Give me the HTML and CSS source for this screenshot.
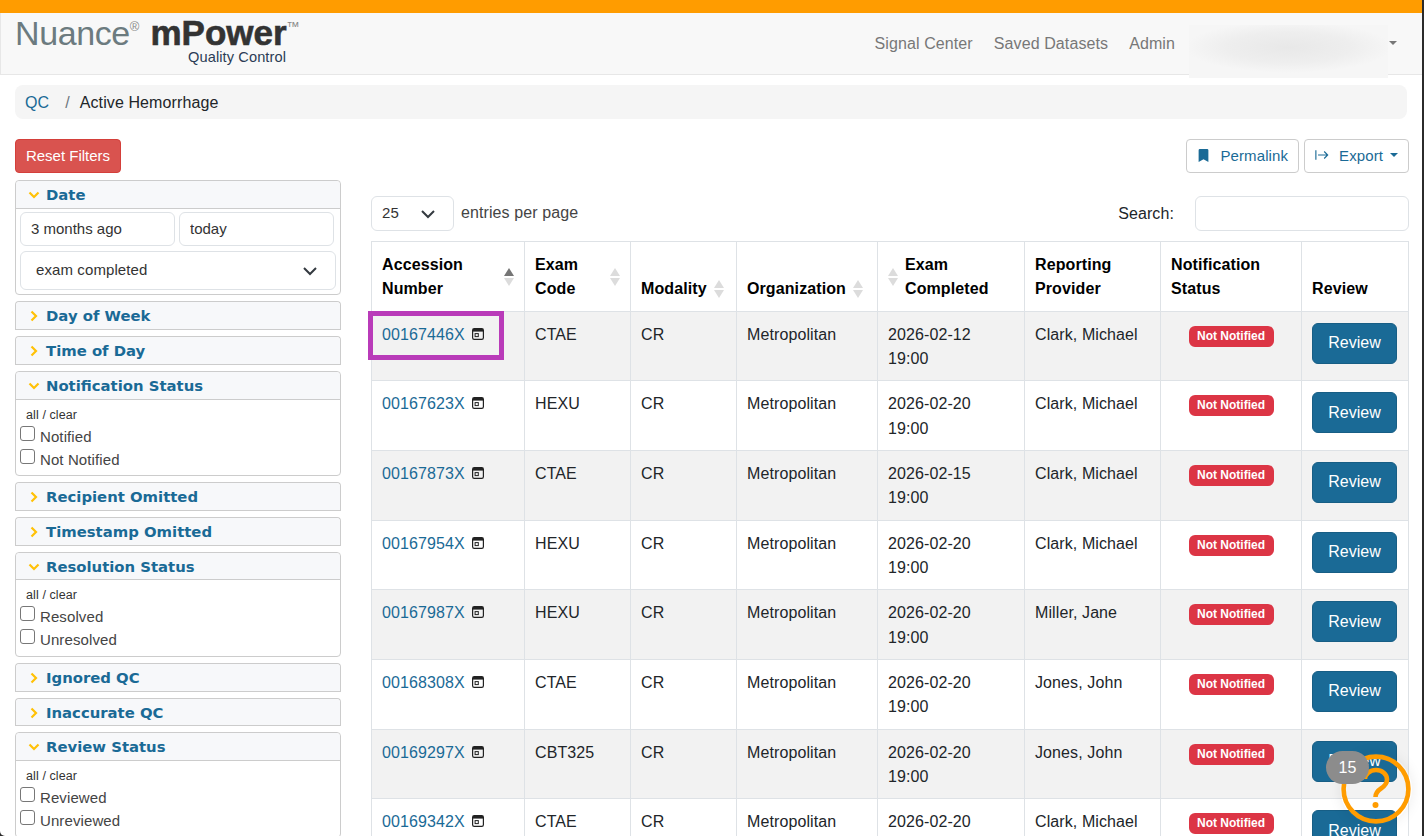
FILE: index.html
```html
<!DOCTYPE html>
<html lang="en">

<head>
    <meta charset="UTF-8">
    <meta name="viewport" content="width=device-width, initial-scale=1.0">
    <title>Active Hemorrhage</title>
    <link rel="stylesheet" href="styles.css">
</head>

<body>
    <svg class="icon-defs" aria-hidden="true">
        <symbol id="icon-window" viewBox="0 0 12 12">
            <rect x=".6" y=".6" width="10.800" height="10.800" rx="1.600" fill="none" stroke="currentColor" stroke-width="1.200"/>
            <path d="M1 1h10v2.600H1z" fill="currentColor"/>
            <rect x="3.100" y="5.600" width="3.200" height="3" fill="none" stroke="currentColor"/>
        </symbol>
        <symbol id="icon-open" viewBox="0 0 12 12">
            <path d="M1.500 3.500 6 8l4.500-4.500"/>
        </symbol>
        <symbol id="icon-closed" viewBox="0 0 12 12">
            <path d="M3.500 1.500 8 6l-4.500 4.500"/>
        </symbol>
    </svg>

    <div class="page">
        <div class="top-strip"></div>

        <nav class="navbar">
            <a class="brand" href="#">
                <span class="brand-name"><span class="brand-nuance">Nuance<sup class="brand-mark">®</sup></span> <span class="brand-mpower">mPower<sup class="brand-mark">™</sup></span></span>
                <span class="brand-sub">Quality Control</span>
            </a>
            <div class="nav-links">
                <a href="#">Signal Center</a>
                <a href="#">Saved Datasets</a>
                <a href="#">Admin</a>
            </div>
            <div class="user-blur"></div>
            <span class="caret nav-caret"></span>
        </nav>

        <div class="breadcrumb">
            <a href="#">QC</a>
            <span class="breadcrumb-sep">/</span>
            <span>Active Hemorrhage</span>
        </div>

        <div class="content">
            <aside class="sidebar">
                <button class="reset-button">Reset Filters</button>

                <div class="panel open">
                    <div class="panel-head">
                        <svg class="chevron"><use href="#icon-open"/></svg>
                        <span>Date</span>
                    </div>
                    <div class="date-body">
                        <div class="date-row">
                            <input class="date-input" type="text" value="3 months ago">
                            <input class="date-input" type="text" value="today">
                        </div>
                        <div class="select-box date-select">
                            <span>exam completed</span>
                            <svg class="select-arrow" viewBox="0 0 16 16"><path d="M2 5l6 6 6-6"/></svg>
                        </div>
                    </div>
                </div>

                <div class="panel">
                    <div class="panel-head">
                        <svg class="chevron"><use href="#icon-closed"/></svg>
                        <span>Day of Week</span>
                    </div>
                </div>

                <div class="panel">
                    <div class="panel-head">
                        <svg class="chevron"><use href="#icon-closed"/></svg>
                        <span>Time of Day</span>
                    </div>
                </div>

                <div class="panel open">
                    <div class="panel-head">
                        <svg class="chevron"><use href="#icon-open"/></svg>
                        <span>Notification Status</span>
                    </div>
                    <div class="check-body">
                        <div class="all-clear">all / clear</div>
                        <label class="check-row"><input type="checkbox"> Notified</label>
                        <label class="check-row"><input type="checkbox"> Not Notified</label>
                    </div>
                </div>

                <div class="panel">
                    <div class="panel-head">
                        <svg class="chevron"><use href="#icon-closed"/></svg>
                        <span>Recipient Omitted</span>
                    </div>
                </div>

                <div class="panel">
                    <div class="panel-head">
                        <svg class="chevron"><use href="#icon-closed"/></svg>
                        <span>Timestamp Omitted</span>
                    </div>
                </div>

                <div class="panel open">
                    <div class="panel-head">
                        <svg class="chevron"><use href="#icon-open"/></svg>
                        <span>Resolution Status</span>
                    </div>
                    <div class="check-body">
                        <div class="all-clear">all / clear</div>
                        <label class="check-row"><input type="checkbox"> Resolved</label>
                        <label class="check-row"><input type="checkbox"> Unresolved</label>
                    </div>
                </div>

                <div class="panel">
                    <div class="panel-head">
                        <svg class="chevron"><use href="#icon-closed"/></svg>
                        <span>Ignored QC</span>
                    </div>
                </div>

                <div class="panel">
                    <div class="panel-head">
                        <svg class="chevron"><use href="#icon-closed"/></svg>
                        <span>Inaccurate QC</span>
                    </div>
                </div>

                <div class="panel open">
                    <div class="panel-head">
                        <svg class="chevron"><use href="#icon-open"/></svg>
                        <span>Review Status</span>
                    </div>
                    <div class="check-body">
                        <div class="all-clear">all / clear</div>
                        <label class="check-row"><input type="checkbox"> Reviewed</label>
                        <label class="check-row"><input type="checkbox"> Unreviewed</label>
                    </div>
                </div>
            </aside>

            <main class="main">
                <div class="toolbar">
                    <button class="outline-button">
                        <svg class="button-icon" viewBox="0 0 16 16"><path d="M2 1.500A1.500 1.500 0 0 1 3.500 0h9A1.500 1.500 0 0 1 14 1.500V16l-6-3.500L2 16z"/></svg>
                        Permalink
                    </button>
                    <button class="outline-button">
                        <svg class="button-icon export-icon" viewBox="0 0 16 16"><path d="M1 2.500v11M3.500 8h11M10.500 4l4 4-4 4"/></svg>
                        Export
                        <span class="caret"></span>
                    </button>
                </div>

                <div class="table-controls">
                    <div class="select-box length-select">
                        <span>25</span>
                        <svg class="select-arrow" viewBox="0 0 16 16"><path d="M2 5l6 6 6-6"/></svg>
                    </div>
                    <span class="length-label">entries per page</span>
                    <label class="search-label" for="search">Search:</label>
                    <input class="search-input" id="search" type="text">
                </div>

                <table class="data-table">
                    <colgroup>
                        <col class="col-acc">
                        <col class="col-code">
                        <col class="col-mod">
                        <col class="col-org">
                        <col class="col-date">
                        <col class="col-prov">
                        <col class="col-status">
                        <col class="col-review">
                    </colgroup>
                    <thead>
                        <tr>
                            <th><div class="th-inner spread"><span>Accession<br>Number</span><span class="sort active"><i></i><i></i></span></div></th>
                            <th><div class="th-inner spread"><span>Exam<br>Code</span><span class="sort"><i></i><i></i></span></div></th>
                            <th><div class="th-inner">Modality<span class="sort"><i></i><i></i></span></div></th>
                            <th><div class="th-inner">Organization<span class="sort"><i></i><i></i></span></div></th>
                            <th><div class="th-inner"><span class="sort"><i></i><i></i></span><span>Exam<br>Completed</span></div></th>
                            <th>Reporting<br>Provider</th>
                            <th>Notification<br>Status</th>
                            <th>Review</th>
                        </tr>
                    </thead>
                    <tbody>
                        <tr>
                            <td class="acc-cell"><span class="highlight-box"></span><a href="#">00167446X</a><svg class="row-icon"><use href="#icon-window"/></svg></td>
                            <td>CTAE</td><td>CR</td><td>Metropolitan</td><td>2026-02-12<br>19:00</td><td>Clark, Michael</td>
                            <td class="status-cell"><span class="badge">Not Notified</span></td>
                            <td class="review-cell"><button class="review-button">Review</button></td>
                        </tr>
                        <tr>
                            <td class="acc-cell"><a href="#">00167623X</a><svg class="row-icon"><use href="#icon-window"/></svg></td>
                            <td>HEXU</td><td>CR</td><td>Metropolitan</td><td>2026-02-20<br>19:00</td><td>Clark, Michael</td>
                            <td class="status-cell"><span class="badge">Not Notified</span></td>
                            <td class="review-cell"><button class="review-button">Review</button></td>
                        </tr>
                        <tr>
                            <td class="acc-cell"><a href="#">00167873X</a><svg class="row-icon"><use href="#icon-window"/></svg></td>
                            <td>CTAE</td><td>CR</td><td>Metropolitan</td><td>2026-02-15<br>19:00</td><td>Clark, Michael</td>
                            <td class="status-cell"><span class="badge">Not Notified</span></td>
                            <td class="review-cell"><button class="review-button">Review</button></td>
                        </tr>
                        <tr>
                            <td class="acc-cell"><a href="#">00167954X</a><svg class="row-icon"><use href="#icon-window"/></svg></td>
                            <td>HEXU</td><td>CR</td><td>Metropolitan</td><td>2026-02-20<br>19:00</td><td>Clark, Michael</td>
                            <td class="status-cell"><span class="badge">Not Notified</span></td>
                            <td class="review-cell"><button class="review-button">Review</button></td>
                        </tr>
                        <tr>
                            <td class="acc-cell"><a href="#">00167987X</a><svg class="row-icon"><use href="#icon-window"/></svg></td>
                            <td>HEXU</td><td>CR</td><td>Metropolitan</td><td>2026-02-20<br>19:00</td><td>Miller, Jane</td>
                            <td class="status-cell"><span class="badge">Not Notified</span></td>
                            <td class="review-cell"><button class="review-button">Review</button></td>
                        </tr>
                        <tr>
                            <td class="acc-cell"><a href="#">00168308X</a><svg class="row-icon"><use href="#icon-window"/></svg></td>
                            <td>CTAE</td><td>CR</td><td>Metropolitan</td><td>2026-02-20<br>19:00</td><td>Jones, John</td>
                            <td class="status-cell"><span class="badge">Not Notified</span></td>
                            <td class="review-cell"><button class="review-button">Review</button></td>
                        </tr>
                        <tr>
                            <td class="acc-cell"><a href="#">00169297X</a><svg class="row-icon"><use href="#icon-window"/></svg></td>
                            <td>CBT325</td><td>CR</td><td>Metropolitan</td><td>2026-02-20<br>19:00</td><td>Jones, John</td>
                            <td class="status-cell"><span class="badge">Not Notified</span></td>
                            <td class="review-cell"><button class="review-button">Review</button></td>
                        </tr>
                        <tr>
                            <td class="acc-cell"><a href="#">00169342X</a><svg class="row-icon"><use href="#icon-window"/></svg></td>
                            <td>CTAE</td><td>CR</td><td>Metropolitan</td><td>2026-02-20<br>19:00</td><td>Clark, Michael</td>
                            <td class="status-cell"><span class="badge">Not Notified</span></td>
                            <td class="review-cell"><button class="review-button">Review</button></td>
                        </tr>
                    </tbody>
                </table>
            </main>
        </div>

        <div class="help-widget">
            <svg class="help-icon" viewBox="0 0 72 72">
                <circle cx="36" cy="36" r="32.400"/>
                <path d="M25 26c0-5 5-9 11-9s11 4 11 9.500c0 4.500-3 7-6 9-3 2-5.500 4-5.500 8.500"/>
                <circle class="help-dot" cx="35.500" cy="52" r="3"/>
            </svg>
            <span class="help-count">15</span>
        </div>
    </div>
</body>

</html>
```

FILE: styles.css
```css
html {
    background-color: #2b2b2b;
}

body {
    margin: 0;
    font-family: "Liberation Sans", Arial, sans-serif;
    font-size: 16px;
    letter-spacing: 0.1px;
    color: #212529;
}

a {
    color: #1a6a96;
    text-decoration: none;
}

.icon-defs {
    position: absolute;
    width: 0;
    height: 0;
}

.page {
    position: relative;
    width: 1422px;
    height: 836px;
    overflow: hidden;
    background-color: white;
    border-bottom-left-radius: 5px;
}

.top-strip {
    height: 13px;
    background-color: #ff9c00;
}

/* navbar */
.navbar {
    display: flex;
    align-items: center;
    box-sizing: border-box;
    height: 62px;
    padding-left: 15px;
    background-color: #f8f8f8;
    border-left: 1px solid #e7e7e7;
    border-bottom: 1px solid #e7e7e7;
}

.brand {
    display: flex;
    flex-direction: column;
    align-self: flex-start;
    width: 300px;
    padding-top: 1px;
}

.brand-name {
    font-size: 34px;
    line-height: 38px;
    white-space: nowrap;
    letter-spacing: -0.4px;
    margin-left: -1px;
}

.brand-nuance {
    color: #6c7b7f;
}

.brand-mpower {
    color: #333;
    font-size: 35px;
    font-weight: bold;
    letter-spacing: 0;
    margin-left: 2px;
    -webkit-text-stroke: 0.6px #333;
}

.brand-mark {
    font-size: 13px;
    font-weight: normal;
    color: #888;
    vertical-align: 14px;
    line-height: 0;
    letter-spacing: 0;
    -webkit-text-stroke: 0;
}

.brand-sub {
    align-self: flex-start;
    margin-left: 172px;
    margin-top: -3px;
    font-size: 14.600px;
    line-height: 16px;
    color: #2b3c55;
}

.nav-links {
    display: flex;
    gap: 21px;
    margin-left: auto;
}

.nav-links a {
    color: #777;
}

.user-blur {
    align-self: flex-start;
    flex: none;
    width: 199px;
    height: 53px;
    margin: 12px 0 0 14px;
    background: radial-gradient(ellipse 52% 48% at 50% 42%, #e8e8e8 0%, #eeeeee 60%, #f6f6f6 100%);
    position: relative;
}

.caret {
    display: inline-block;
    border-top: 4px solid currentColor;
    border-left: 4px solid transparent;
    border-right: 4px solid transparent;
    vertical-align: 2px;
    margin-left: 4px;
}

.nav-caret {
    color: #777;
    margin: -2px 25px 0 1px;
}

/* breadcrumb */
.breadcrumb {
    display: flex;
    align-items: center;
    box-sizing: border-box;
    height: 34px;
    margin: 10px 15px 0 15px;
    padding: 1px 10px 0 10px;
    background-color: #f5f5f5;
    border-radius: 8px;
}

.breadcrumb-sep {
    margin: 0 10px 0 16px;
    color: #6c757d;
}

/* columns */
.content {
    display: grid;
    grid-template-columns: 326px 1fr;
    gap: 30px;
    padding: 20px 14px 0 15px;
}

/* filters */
.reset-button {
    display: block;
    height: 34px;
    width: 106px;
    margin-bottom: 7px;
    padding: 0 0 2px 0;
    color: white;
    background-color: #d9534f;
    border: 1px solid #d43f3a;
    border-radius: 4px;
    font-family: inherit;
    font-size: 15px;
}

.panel {
    margin-bottom: 6px;
    border: 1px solid #ccc;
    border-bottom: none;
    border-radius: 4px 4px 0 0;
}

.panel.open {
    border-bottom: 1px solid #ccc;
    border-radius: 4px;
}

.panel-head {
    display: flex;
    align-items: center;
    height: 25.300px;
    padding-top: 1.500px;
    background-color: #f7f8fa;
    border-bottom: 1px solid #ccc;
    border-radius: 4px 4px 0 0;
    color: #1a6a96;
    font-family: "DejaVu Sans", Verdana, sans-serif;
    font-size: 14.850px;
    font-weight: bold;
    letter-spacing: 0;
}

.chevron {
    width: 12px;
    height: 12px;
    margin: 0 6px 0 12px;
    fill: none;
    stroke: #ffc107;
    stroke-width: 2.200;
}

.date-body {
    padding: 3.500px 4px 3.900px 4px;
}

.date-row {
    display: flex;
    gap: 4px;
    margin-bottom: 5px;
}

.date-input {
    box-sizing: border-box;
    width: 155px;
    height: 34px;
    padding: 0 10px 2px 10px;
    border: 1px solid #dee2e6;
    border-radius: 6px;
    color: #333;
    font-family: inherit;
    font-size: 15px;
}

.select-box {
    display: flex;
    align-items: center;
    justify-content: space-between;
    box-sizing: border-box;
    border: 1px solid #dee2e6;
    border-radius: 6px;
    color: #333;
    font-size: 15px;
}

.select-box span {
    margin-bottom: 2px;
}

.date-select {
    width: 316px;
    height: 39px;
    padding: 0 17px 0 15px;
}

.select-arrow {
    width: 16px;
    height: 16px;
    fill: none;
    stroke: #343a40;
    stroke-width: 2;
}

.check-body {
    padding: 4px 4px 3.400px 4px;
}

.all-clear {
    margin-left: 6px;
    font-size: 12.500px;
    line-height: 22px;
    color: #333;
}

.check-row {
    display: flex;
    align-items: flex-start;
    gap: 5px;
    height: 23px;
    font-size: 15px;
    line-height: 21px;
    color: #444;
}

.check-row input {
    appearance: none;
    box-sizing: border-box;
    width: 15px;
    height: 15px;
    margin: 0;
    background-color: white;
    border: 1.500px solid #777;
    border-radius: 3px;
}

/* right side */
.toolbar {
    display: flex;
    justify-content: flex-end;
    gap: 5px;
}

.outline-button {
    display: flex;
    align-items: center;
    height: 34px;
    padding: 0 10px 2px 10px;
    color: #1a6a96;
    background-color: white;
    border: 1px solid #ccc;
    border-radius: 4px;
    font-family: inherit;
    font-size: 15px;
    letter-spacing: 0.1px;
}

.button-icon {
    width: 13px;
    height: 13px;
    margin-right: 10px;
    fill: #1a6a96;
}

.export-icon {
    width: 14px;
    height: 14px;
    fill: none;
    stroke: #1a6a96;
    stroke-width: 1.300;
}

.outline-button .caret {
    margin-left: 7px;
}

.table-controls {
    display: flex;
    align-items: center;
    height: 35px;
    margin: 23px 0 10px 0;
}

.length-select {
    width: 83px;
    height: 35px;
    padding: 0 17px 0 10px;
}

.length-label {
    margin: 0 0 2px 7px;
    color: #444;
}

.search-label {
    margin-left: auto;
    margin-right: 21px;
}

.search-input {
    box-sizing: border-box;
    width: 214px;
    height: 35px;
    border: 1px solid #dee2e6;
    border-radius: 6px;
}

.data-table {
    width: 100%;
    table-layout: fixed;
    border-collapse: collapse;
    line-height: 24.330px;
}

.col-acc { width: 153px; }
.col-code { width: 106px; }
.col-mod { width: 106px; }
.col-org { width: 141px; }
.col-date { width: 147px; }
.col-prov { width: 136px; }
.col-status { width: 141px; }
.col-review { width: 107px; }

.data-table th,
.data-table td {
    padding: 11px 10px 9px 10px;
    border: 1px solid #dee2e6;
    vertical-align: top;
    text-align: left;
}

.data-table th {
    vertical-align: bottom;
    font-weight: bold;
    color: black;
}

.data-table tbody tr:nth-child(odd) {
    background-color: #f2f2f2;
}

.th-inner {
    display: flex;
    align-items: center;
    gap: 7px;
}

.th-inner.spread {
    justify-content: space-between;
}

.sort {
    display: flex;
    flex-direction: column;
    gap: 2px;
    flex: none;
}

.sort i {
    display: block;
    width: 0;
    height: 0;
    border-left: 5px solid transparent;
    border-right: 5px solid transparent;
    border-bottom: 8px solid #dcdcdc;
}

.sort i + i {
    border-bottom: none;
    border-top: 8px solid #dcdcdc;
}

.sort.active i:first-child {
    border-bottom-color: #757575;
}

.acc-cell {
    position: relative;
}

.row-icon {
    width: 12px;
    height: 12px;
    margin-left: 7px;
    color: #222;
    vertical-align: 0;
}

.highlight-box {
    position: absolute;
    left: -4px;
    top: -1px;
    box-sizing: border-box;
    width: 136px;
    height: 49px;
    border: 5px solid #b93bb9;
}

.data-table .status-cell {
    text-align: center;
}

.badge {
    display: inline-block;
    margin-top: 3px;
    padding: 0 8.500px;
    background-color: #dc3545;
    border-radius: 6px;
    color: white;
    font-size: 12px;
    font-weight: bold;
    line-height: 21px;
    letter-spacing: 0;
    vertical-align: top;
}

.data-table .review-cell {
    padding-top: 10px;
    padding-bottom: 10px;
}

.review-button {
    display: block;
    width: 85px;
    height: 41px;
    margin-top: 1px;
    padding: 0;
    color: white;
    background-color: #1a6a96;
    border: 1px solid #175e85;
    border-radius: 6px;
    font-family: inherit;
    font-size: 16px;
}

/* floating help button */
.help-widget {
    position: absolute;
    left: 1340px;
    top: 753px;
    width: 72px;
    height: 72px;
}

.help-icon {
    display: block;
    width: 72px;
    height: 72px;
    fill: none;
    stroke: #ff9c00;
    stroke-width: 4.600;
    border-radius: 50%;
    box-shadow: 0 0 14px rgba(0, 0, 0, 0.08);
}

.help-dot {
    fill: #ff9c00;
    stroke: none;
}

.help-count {
    position: absolute;
    left: -14px;
    top: -2px;
    width: 43px;
    height: 33px;
    border-radius: 17px;
    background-color: #8c8c8c;
    color: white;
    font-size: 16px;
    line-height: 33px;
    text-align: center;
}
```
